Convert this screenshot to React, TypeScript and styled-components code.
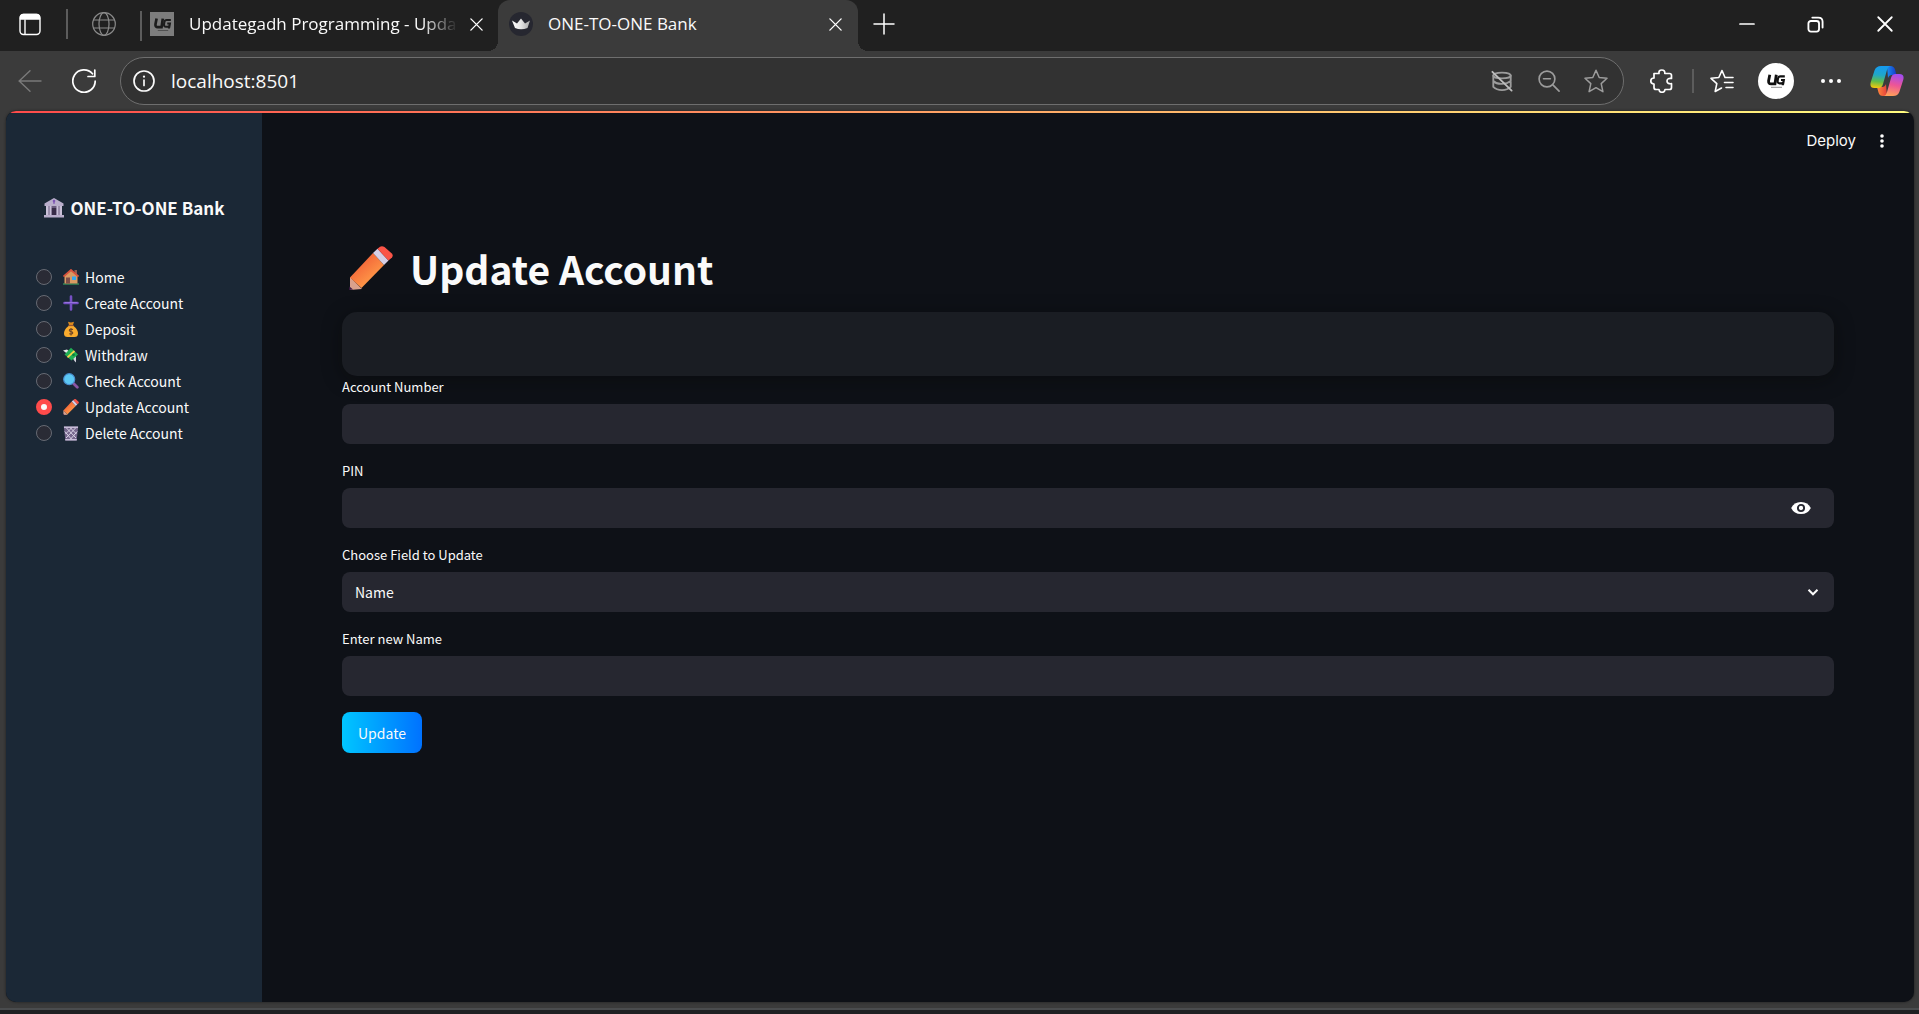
import React, { useState } from "react";
import styled, { createGlobalStyle } from "styled-components";

const pageFont = `"Noto Sans CJK SC", "Noto Sans", sans-serif`;
const chromeFont = `"Open Sans", "Noto Sans", sans-serif`;

const GlobalStyle = createGlobalStyle`
  *, *::before, *::after { box-sizing: border-box; }
  body { margin: 0; background: #3b3b3b; font-family: ${pageFont}; color: #fafafa; }
  button, input, select { font: inherit; color: inherit; }
  button { background: none; border: 0; padding: 0; cursor: pointer; }
  svg { display: block; flex: none; }
`;

const Window = styled.div`
  display: flex;
  flex-direction: column;
  height: 100vh;
  overflow: hidden;
`;

const TabStrip = styled.header`
  display: flex;
  flex: none;
  height: 51px;
  background: #202020;
  font-family: ${chromeFont};
  font-size: 17px;
`;

const Cell = styled.button<{ $w: number; $color?: string }>`
  display: flex;
  flex: none;
  align-items: center;
  justify-content: center;
  width: ${(p) => p.$w}px;
  height: 48px;
  color: ${(p) => p.$color ?? "#ffffff"};
`;

const Divider = styled.span<{ $h: number }>`
  flex: none;
  align-self: center;
  width: 2px;
  height: ${(p) => p.$h}px;
  background: #5c5c5c;
`;

const LeadCells = styled.div`
  display: flex;
  gap: 6px;
  padding-bottom: 3px;
`;

const Tab = styled.div<{ $active?: boolean }>`
  position: relative;
  display: flex;
  flex: 0 1 ${(p) => (p.$active ? 360 : 356)}px;
  align-items: center;
  min-width: 0;
  padding: ${(p) => (p.$active ? "0 11px 3px" : "0 10px 3px 8px")};
  background: ${(p) => (p.$active ? "#3b3b3b" : "transparent")};
  border-radius: 12px 12px 0 0;

  &::before,
  &::after {
    content: ${(p) => (p.$active ? '""' : "none")};
    position: absolute;
    bottom: 0;
    width: 10px;
    height: 10px;
  }
  &::before {
    right: 100%;
    background: radial-gradient(circle at 0 0, transparent 10px, #3b3b3b 10px);
  }
  &::after {
    left: 100%;
    background: radial-gradient(circle at 100% 0, transparent 10px, #3b3b3b 10px);
  }
`;

const TabTitle = styled.span<{ $fade?: boolean }>`
  flex: 1;
  min-width: 0;
  margin: 0 6px 0 15px;
  overflow: hidden;
  white-space: nowrap;
  line-height: 24px;
  mask-image: ${(p) => (p.$fade ? "linear-gradient(90deg, #000 calc(100% - 36px), transparent)" : "none")};
`;

const Favicon = styled.span`
  display: flex;
  flex: none;
  align-items: center;
  justify-content: center;
  width: 24px;
  height: 24px;
  background: #7d7d7d;
`;

const WindowControls = styled.div`
  display: flex;
  margin-left: auto;
`;

const Toolbar = styled.div`
  display: flex;
  flex: none;
  align-items: center;
  height: 60px;
  padding-right: 5px;
`;

const History = styled.div`
  display: flex;
  gap: 6px;
  padding: 0 12px 0 6px;
`;

const AddressBar = styled.label`
  display: flex;
  flex: 1;
  align-items: center;
  height: 48px;
  margin-right: 8px;
  padding: 0 4px 0 11px;
  background: #323232;
  border: 1px solid #6e6e6e;
  border-radius: 24px;
`;

const AddressInput = styled.input`
  flex: 1;
  min-width: 0;
  margin-left: 15px;
  padding: 0;
  border: 0;
  outline: 0;
  background: none;
  font-family: ${chromeFont};
  font-size: 19px;
`;

const Avatar = styled.span`
  display: flex;
  align-items: center;
  justify-content: center;
  width: 36px;
  height: 36px;
  border-radius: 50%;
  background: #ffffff;
`;

const Page = styled.div`
  display: flex;
  flex: 1;
  flex-direction: column;
  min-height: 0;
  margin: 0 5px 6px 6px;
  overflow: hidden;
  border-radius: 10px;
  background: #0e1117;
  box-shadow: 0 0 3px rgba(0, 0, 0, 0.5);
`;

const Accent = styled.div`
  flex: none;
  height: 2px;
  background: linear-gradient(90deg, #ff4b4b, #fffd80);
`;

const Columns = styled.div`
  display: flex;
  flex: 1;
  min-height: 0;
`;

const Taskbar = styled.footer`
  flex: none;
  height: 6px;
  border-top: 2px solid #4a4c4e;
  background: #1f2022;
`;

const Sidebar = styled.aside`
  flex: none;
  width: 256px;
  padding: 82px 30px 0;
  background: #1b2836;
`;

const Brand = styled.h2`
  display: flex;
  align-items: center;
  justify-content: center;
  gap: 7px;
  margin: 0 0 43px;
  white-space: nowrap;
  font-size: 17px;
  line-height: 26px;
  font-weight: 700;
`;

const Menu = styled.fieldset`
  display: flex;
  flex-direction: column;
  margin: 0;
  padding: 0;
  border: 0;
`;

const MenuItem = styled.label`
  display: flex;
  align-items: center;
  gap: 6px;
  white-space: nowrap;
  font-size: 14px;
  line-height: 26px;
  cursor: pointer;
`;

const Radio = styled.input`
  appearance: none;
  flex: none;
  width: 16px;
  height: 16px;
  margin: 0 5px 0 0;
  border: 1px solid #666a73;
  border-radius: 50%;
  background: #2a2b35;

  &:checked {
    border: 5px solid #ff4b4b;
    background: #fafafa;
  }
`;

const Main = styled.main`
  flex: 1;
  min-width: 0;
`;

const AppBar = styled.div`
  display: flex;
  align-items: center;
  justify-content: flex-end;
  gap: 14px;
  height: 56px;
  padding-right: 20px;
`;

const Deploy = styled.button`
  font-family: Inter, sans-serif;
  font-size: 15px;
  line-height: 24px;
`;

const Form = styled.form`
  display: flex;
  flex-direction: column;
  align-items: stretch;
  gap: 16px;
  padding: 75px 80px 0;
`;

const Title = styled.h1`
  display: flex;
  align-items: center;
  gap: 17px;
  margin: 0 0 4px;
  padding-left: 7px;
  font-size: 39px;
  line-height: 48px;
  font-weight: 700;
`;

const Card = styled.div`
  height: 64px;
  margin-bottom: -16px;
  border-radius: 15px;
  background: #1a1d23;
  box-shadow: 0 4px 20px rgba(8, 8, 4, 0.4);
`;

const Field = styled.div`
  display: flex;
  flex-direction: column;
  gap: 6px;
`;

const FieldLabel = styled.label`
  position: relative;
  font-size: 13px;
  line-height: 22px;
`;

const Control = styled.div`
  position: relative;
  display: flex;
  align-items: center;
  height: 40px;
  padding: 0 13px;
  border-radius: 8px;
  background: #262730;
`;

const TextInput = styled.input`
  flex: 1;
  min-width: 0;
  padding: 0;
  border: 0;
  outline: 0;
  background: none;
  font-size: 14px;
  line-height: 24px;
`;

const Select = styled.select`
  appearance: none;
  flex: 1;
  padding: 0;
  border: 0;
  outline: 0;
  background: #262730;
  font-size: 14px;
  line-height: 24px;
`;

const SubmitButton = styled.button`
  align-self: flex-start;
  height: 41px;
  padding: 0 16px;
  border-radius: 8px;
  background: linear-gradient(90deg, #00c6ff, #0072ff);
  font-size: 14px;
  line-height: 24px;
`;

type IconProps = { size?: number; w?: number; children: React.ReactNode };
const Line = ({ size = 24, w = 1.6, children }: IconProps) => (
  <svg width={size} height={size} viewBox="0 0 24 24" fill="none" stroke="currentColor" strokeWidth={w} strokeLinecap="round" strokeLinejoin="round" aria-hidden>
    {children}
  </svg>
);

const Cross = ({ size, w }: { size: number; w: number }) => (
  <Line size={size} w={w}><path d="M3 3 21 21M21 3 3 21" /></Line>
);

const UgLogo = ({ size, color }: { size: number; color: string }) => (
  <svg width={size} height={size} viewBox="0 0 20 20" fill="none" stroke={color} strokeWidth="2.8" aria-hidden>
    <path d="M3.800 3.800 2.600 9.800q-.3 3 2.400 3h4L10.300 3.800" />
    <path d="M18.800 5.300h-4.300q-2.200 0-2.500 2l-.4 2.500q-.2 2.500 2 2.500h3.600l.6-3.300h-2.800M16.800 11v3.200" strokeWidth="2.200" />
    <path d="M5 16.300h11" strokeWidth=".8" opacity=".6" />
  </svg>
);

const Crown = () => (
  <svg width="24" height="24" viewBox="0 0 24 24" aria-hidden>
    <defs>
      <linearGradient id="crown" x1="0" x2="1"><stop stopColor="#fff" /><stop offset=".5" stopColor="#e4e4e4" /><stop offset="1" stopColor="#a8a8a8" /></linearGradient>
    </defs>
    <circle cx="12" cy="12" r="12" fill="#262730" />
    <path d="M3 8.500 8 11.500 12 6.500 16 11.500 21 8.500 18.500 16Q12 18.500 6 16Z" fill="url(#crown)" />
  </svg>
);

const Copilot = () => (
  <svg width="34" height="32" viewBox="0 0 34 32" aria-hidden>
    <defs>
      <linearGradient id="cpA" x1=".4" y1="0" x2=".3" y2="1"><stop stopColor="#169bf0" /><stop offset=".4" stopColor="#20a8c8" /><stop offset=".7" stopColor="#62bd4a" /><stop offset="1" stopColor="#f6c80c" /></linearGradient>
      <linearGradient id="cpB" x1=".6" y1="0" x2=".4" y2="1"><stop stopColor="#a24cf0" /><stop offset=".5" stopColor="#ee5596" /><stop offset="1" stopColor="#ffa05a" /></linearGradient>
      <linearGradient id="cpC" x1="0" x2="1"><stop stopColor="#1c8df0" /><stop offset="1" stopColor="#1438c8" /></linearGradient>
      <linearGradient id="cpD" x1="0" x2="1"><stop stopColor="#ff8a3c" /><stop offset="1" stopColor="#e6403a" /></linearGradient>
    </defs>
    <path d="M17 1h3.500q3.500 0 4.500 3.500L26.500 10H22q-3 0-4 3Z" fill="url(#cpC)" />
    <path d="M17 31h-4q-3.500 0-4.500-3.500L7 22h5q3 0 4-3Z" fill="url(#cpD)" />
    <path d="M11 1h9q-2 .5-3 4l-4 14q-1 4-4.500 4H4.500Q-.8 23 .8 17L4.500 5.500Q6 1 11 1Z" fill="url(#cpA)" />
    <path d="M23 31h-9q2-.5 3-4l4-14q1-4 4.500-4h4Q34.800 9 33.200 15L29.500 26.500Q28 31 23 31Z" fill="url(#cpB)" />
  </svg>
);

const Pencil = ({ size = 16 }: { size?: number }) => (
  <svg width={size} height={size} viewBox="0 0 44 44" aria-hidden>
    <defs>
      <linearGradient id="pencil" x1=".3" y1=".3" x2=".7" y2=".8"><stop stopColor="#f4693a" /><stop offset="1" stopColor="#ff9a48" /></linearGradient>
    </defs>
    <path d="M1 31 13 43 1 44Z" fill="#d9a08c" />
    <path d="M0 44 .5 40.500 4 43.500Z" fill="#3f1c48" />
    <path d="M1 31.500 24 7 35 19 12.500 42Z" fill="url(#pencil)" />
    <path d="M24 7 28.500 2.800 39.500 14.500 35 19Z" fill="#d6cfe6" />
    <path d="M28.500 2.800 31 .8Q33-.5 35.500 1L42.800 7.500Q44.500 9.500 43 11.500L39.500 14.500Z" fill="#fb5548" />
  </svg>
);

const Bank = () => (
  <svg width="20" height="20" viewBox="0 0 20 20" aria-hidden>
    <path d="M10 0 19.500 5.500V8H.5V5.500Z" fill="#b9aecb" />
    <path d="M10 1.800v4M8.800 3h2.400" stroke="#7b4fb4" strokeWidth="1.400" />
    <path d="M2 8h16v9H2z" fill="#6c5d80" />
    <path d="M7.500 10h5v7h-5z" fill="#382c48" />
    <path d="M2 8h2.500v9H2zM5.500 8h2v9h-2zM12.500 8h2v9h-2zM15.500 8H18v9h-2.500z" fill="#c9c0d8" />
    <path d="M0 17h20v2.500H0z" fill="#b9aecb" />
  </svg>
);

const House = () => (
  <svg width="16" height="16" viewBox="0 0 16 16" aria-hidden>
    <path d="M0 14.500h16v1H0z" fill="#3cb664" />
    <path d="M11.500 1H14v5h-2.500z" fill="#8e5c50" />
    <path d="M1.500 7 8 1.500 14.500 7v7.500h-13z" fill="#d99a63" />
    <path d="M3 8.500h4v6H3z" fill="#7d4d48" />
    <path d="M9 7.500h4v3.500H9z" fill="#35a7ee" />
    <path d="M.5 7.500 8 1l7.500 6.500" fill="none" stroke="#d9533d" strokeWidth="1.800" />
  </svg>
);

const Plus = () => (
  <svg width="16" height="16" viewBox="0 0 16 16" fill="none" stroke="#7650c4" strokeWidth="2.600" strokeLinecap="round" aria-hidden>
    <path d="M8 1.500v13M1.500 8h13" />
    <path d="M2 7.500h12" stroke="#9472dc" strokeWidth="1" />
  </svg>
);

const MoneyBag = () => (
  <svg width="16" height="16" viewBox="0 0 16 16" aria-hidden>
    <path d="M5 .8 8 1.600 11 .8 10 4H6z" fill="#dc8a1e" />
    <path d="M6 4.500h4Q15 8.500 15 12.500 15 16 11.500 16h-7Q1 16 1 12.500 1 8.500 6 4.500Z" fill="#f9ab2e" />
    <path d="M5.500 4.500h5" stroke="#9c5630" strokeWidth="1.200" />
    <path d="M10 8.500Q6.300 7.500 6.300 9.300 6.300 10.400 8 10.600 9.900 10.800 9.800 12 9.500 13.500 6.200 12.800M8 7v7.500" fill="none" stroke="#6d4528" strokeWidth="1.100" />
  </svg>
);

const FlyingMoney = () => (
  <svg width="16" height="16" viewBox="0 0 16 16" aria-hidden>
    <path d="M0 3.500 4 2.500 8 6 4 6.500Z" fill="#e6e6ea" />
    <path d="M9 10 13 8.500V15.500L11.500 14Z" fill="#d4d2dc" />
    <path d="M8 .8 15 7.500 8.500 13.500 1.500 7.500Z" fill="#1fae54" />
    <path d="M4.500 10.300 11.500 4" stroke="#f7d24a" strokeWidth="1.800" />
    <circle cx="10.500" cy="7.800" r="1.300" fill="#0c7a3c" />
  </svg>
);

const Magnifier = () => (
  <svg width="16" height="16" viewBox="0 0 16 16" aria-hidden>
    <path d="M10.500 10.500 14.300 14.300" stroke="#8a56a4" strokeWidth="2.800" strokeLinecap="round" />
    <circle cx="6.200" cy="6.200" r="5.500" fill="#5cc8f4" stroke="#4a8fd0" strokeWidth="1.200" />
  </svg>
);

const Basket = () => (
  <svg width="16" height="16" viewBox="0 0 16 16" aria-hidden>
    <path d="M.8 1.500h14.400L13.600 15.500H2.400Z" fill="#75668c" />
    <path d="M3 2.500 13 13M1.800 6.500 9 14.800M7 2.500 13.500 9M13 2.500 3 13M14.200 6.500 7 14.800M9 2.500 2.500 9" stroke="#d9d3e6" strokeWidth="1" />
    <path d="M1 1.500h14v1.500H1zM2.200 14h11.600v1.600H2.200z" fill="#c7bdd8" />
  </svg>
);

const MENU = [
  { name: "Home", icon: <House /> },
  { name: "Create Account", icon: <Plus /> },
  { name: "Deposit", icon: <MoneyBag /> },
  { name: "Withdraw", icon: <FlyingMoney /> },
  { name: "Check Account", icon: <Magnifier /> },
  { name: "Update Account", icon: <Pencil /> },
  { name: "Delete Account", icon: <Basket /> },
];

const BrowserTabs = () => (
  <TabStrip>
    <LeadCells>
      <Cell $w={60} aria-label="Tab actions">
        <Line w={1.4}>
          <rect x="2" y="2.500" width="20" height="20" rx="3.500" />
          <path d="M2.500 5.500Q2.500 2.500 5.500 2.500h13q3 0 3 3V7h-19Z" fill="currentColor" />
          <path d="M7 8v14" />
        </Line>
      </Cell>
      <Divider $h={30} />
    </LeadCells>
    <Cell $w={72} $color="#8a8a8a" aria-label="Pinned tab">
      <Line w={1.2}>
        <circle cx="12" cy="12" r="11.300" />
        <ellipse cx="12" cy="12" rx="5" ry="11.300" />
        <path d="M1.600 8h20.800M1.600 16h20.800" />
      </Line>
    </Cell>
    <Divider $h={30} />
    <Tab>
      <Favicon><UgLogo size={19} color="#1c1c1c" /></Favicon>
      <TabTitle $fade>Updategadh Programming - Updategadh</TabTitle>
      <Cell $w={24} aria-label="Close tab"><Cross size={15} w={2.2} /></Cell>
    </Tab>
    <Tab $active>
      <Crown />
      <TabTitle>ONE-TO-ONE Bank</TabTitle>
      <Cell $w={24} aria-label="Close tab"><Cross size={15} w={2.2} /></Cell>
    </Tab>
    <Cell $w={52} aria-label="New tab"><Line w={1.5}><path d="M12 2v20M2 12h20" /></Line></Cell>
    <WindowControls>
      <Cell $w={69} aria-label="Minimize"><Line size={16} w={2.6}><path d="M1.500 12h21" /></Line></Cell>
      <Cell $w={69} aria-label="Restore">
        <Line size={17} w={2.6}>
          <rect x="2" y="7" width="15" height="15" rx="3.500" />
          <path d="M7.500 2.200H16q6 0 6 6v8" />
        </Line>
      </Cell>
      <Cell $w={69} aria-label="Close window"><Cross size={18} w={2.4} /></Cell>
    </WindowControls>
  </TabStrip>
);

const BrowserToolbar = () => (
  <Toolbar>
    <History>
      <Cell $w={48} $color="#7a7a7a" aria-label="Back"><Line w={1.4}><path d="M23 12H1M12 1.800 1.200 12 12 22.200" /></Line></Cell>
      <Cell $w={48} aria-label="Reload"><Line w={1.7}><path d="M23.200 12A11.200 11.200 0 1 1 20.500 4.800M22.800 1v6.500H16" /></Line></Cell>
    </History>
    <AddressBar>
      <Line w={1.7}>
        <circle cx="12" cy="12" r="10" />
        <path d="M12 11v5.500" /><path d="M12 7.500v.2" strokeWidth="2.200" />
      </Line>
      <AddressInput aria-label="Address" defaultValue="localhost:8501" />
      <Cell $w={47} $color="#9c9c9c" aria-label="Storage blocked">
        <Line size={22} w={2}>
          <ellipse cx="12" cy="6" rx="9.500" ry="3.200" />
          <path d="M2.500 6v12.500Q6 22 12 22t9.500-3.500V6M2.500 12Q6 15.500 12 15.200t9.500-3.200" />
          <path d="M1.500 2 22.500 22.500" stroke="#bdbdbd" />
        </Line>
      </Cell>
      <Cell $w={47} $color="#9c9c9c" aria-label="Zoom"><Line size={22} w={1.800}><circle cx="9.800" cy="9.800" r="8.600" /><path d="M6 9.500h7.500M16.500 16.500 23 23" /></Line></Cell>
      <Cell $w={47} $color="#9c9c9c" aria-label="Add to favorites"><Line w={1.5}><path d="M12 1.200 15.200 8.500 23 9.300 17.200 14.600 18.900 22.700 12 18.700 5.100 22.700 6.800 14.600 1 9.300 8.800 8.500Z" /></Line></Cell>
    </AddressBar>
    <Cell $w={60} aria-label="Extensions">
      <Line w={1.7}>
        <path d="M4 4.500h5Q8.500 1 11.800 1T14.800 4.500H19.500q2 0 2 2V9.500Q17 9 17 12t4.500 2.700V18.500q0 2-2 2H15Q14.800 23.300 12 23.300T9 20.500H6q-2 0-2-2V15Q.8 15 .8 12T4 9Z" />
      </Line>
    </Cell>
    <Divider $h={24} />
    <Cell $w={56} aria-label="Favorites">
      <Line w={1.6}><path d="M15 8.500 12 1.500 8.800 8.500 1 9.300 6.800 14.600 5.200 22.500 11.500 19M15.500 8.500H23M14.500 13.500H23M16 18.500h7" /></Line>
    </Cell>
    <Cell $w={52} aria-label="Profile"><Avatar><UgLogo size={20} color="#111111" /></Avatar></Cell>
    <Cell $w={58} aria-label="Browser menu">
      <svg width="20" height="4" viewBox="0 0 20 4" fill="currentColor" aria-hidden><circle cx="2" cy="2" r="2" /><circle cx="10" cy="2" r="2" /><circle cx="18" cy="2" r="2" /></svg>
    </Cell>
    <Cell $w={54} aria-label="Copilot"><Copilot /></Cell>
  </Toolbar>
);

export default function App() {
  const [page, setPage] = useState("Update Account");
  const [showPin, setShowPin] = useState(false);

  return (
    <Window>
      <GlobalStyle />
      <BrowserTabs />
      <BrowserToolbar />
      <Page>
        <Accent />
        <Columns>
          <Sidebar>
            <Brand><Bank />ONE-TO-ONE Bank</Brand>
            <Menu aria-label="Navigation">
              {MENU.map((item) => (
                <MenuItem key={item.name}>
                  <Radio type="radio" name="page" checked={page === item.name} onChange={() => setPage(item.name)} />
                  {item.icon}
                  {item.name}
                </MenuItem>
              ))}
            </Menu>
          </Sidebar>
          <Main>
            <AppBar>
              <Deploy>Deploy</Deploy>
              <Cell $w={24} aria-label="App menu">
                <svg width="4" height="14" viewBox="0 0 4 14" fill="currentColor" aria-hidden><circle cx="2" cy="2" r="1.800" /><circle cx="2" cy="7" r="1.800" /><circle cx="2" cy="12" r="1.800" /></svg>
              </Cell>
            </AppBar>
            <Form onSubmit={(e) => e.preventDefault()}>
              <Title><Pencil size={44} />Update Account</Title>
              <Card />
              <Field>
                <FieldLabel htmlFor="account">Account Number</FieldLabel>
                <Control><TextInput id="account" type="text" /></Control>
              </Field>
              <Field>
                <FieldLabel htmlFor="pin">PIN</FieldLabel>
                <Control>
                  <TextInput id="pin" type={showPin ? "text" : "password"} />
                  <Cell type="button" $w={40} aria-label="Show PIN" onClick={() => setShowPin(!showPin)}>
                    <svg width="20" height="12" viewBox="0 0 20 12" aria-hidden>
                      <path d="M10 0Q17 0 19.800 6 17 12 10 12T.2 6Q3 0 10 0Z" fill="currentColor" />
                      <circle cx="10" cy="6" r="3.100" fill="none" stroke="#262730" strokeWidth="1.900" />
                    </svg>
                  </Cell>
                </Control>
              </Field>
              <Field>
                <FieldLabel htmlFor="field">Choose Field to Update</FieldLabel>
                <Control>
                  <Select id="field" defaultValue="Name">
                    <option>Name</option>
                    <option>PIN</option>
                  </Select>
                  <svg width="16" height="16" viewBox="0 0 16 16" fill="none" stroke="currentColor" strokeWidth="2" aria-hidden><path d="M3.500 5.800 8 10.300 12.500 5.800" /></svg>
                </Control>
              </Field>
              <Field>
                <FieldLabel htmlFor="value">Enter new Name</FieldLabel>
                <Control><TextInput id="value" type="text" /></Control>
              </Field>
              <SubmitButton type="submit">Update</SubmitButton>
            </Form>
          </Main>
        </Columns>
      </Page>
      <Taskbar />
    </Window>
  );
}
